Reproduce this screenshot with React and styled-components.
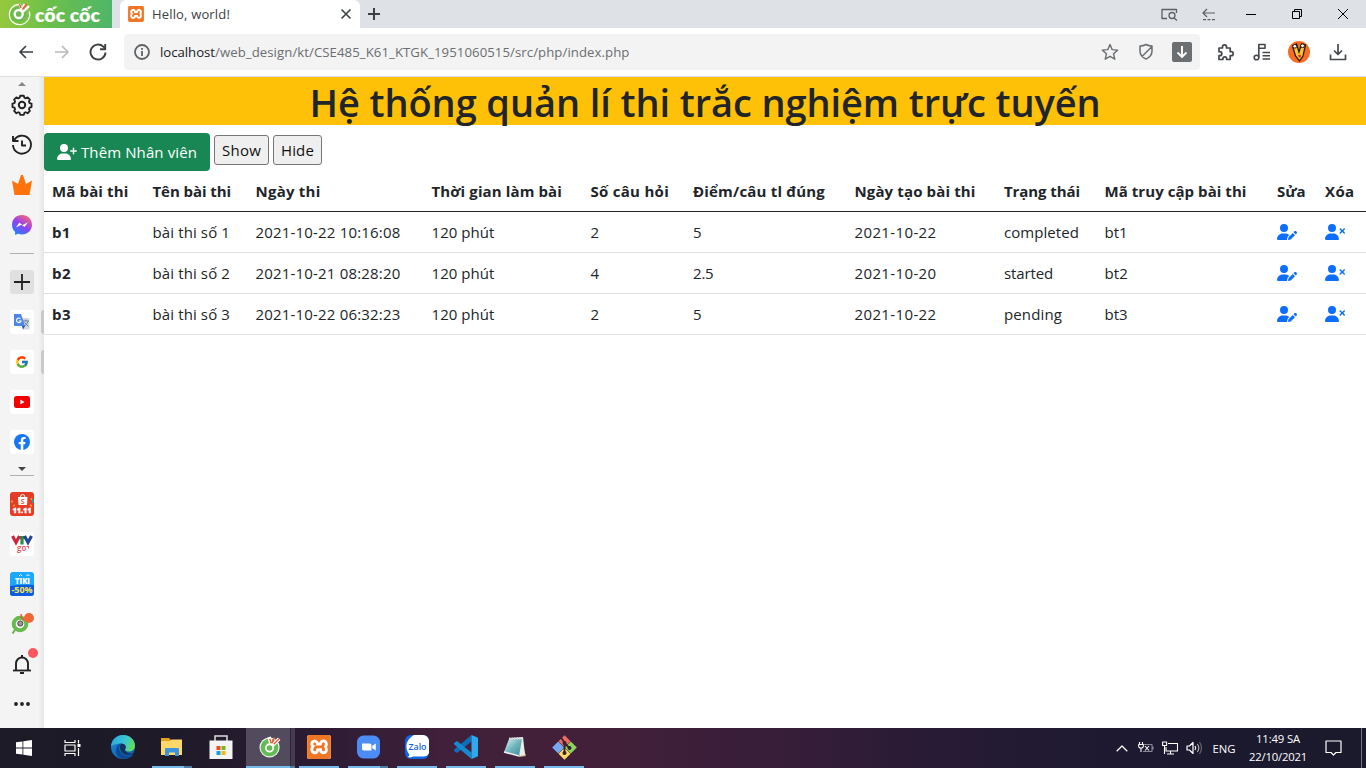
import React, { useLayoutEffect, useRef, useState } from "react";
import styled, { createGlobalStyle } from "styled-components";
import { FaUserPlus, FaUserPen, FaUserXmark } from "react-icons/fa6";
import { FcGoogle } from "react-icons/fc";
import { SiXampp } from "react-icons/si";

const GlobalStyle = createGlobalStyle`
  * { box-sizing: border-box; }
  body {
    margin: 0;
    background: #fff;
    color: #212529;
    font-family: "Segoe UI", "Open Sans", "Noto Sans", sans-serif;
    overflow: hidden;
  }
  svg { display: block; flex: none; }
`;

/* ---------- text that is tracked to a given width ---------- */

const Tracked = styled.span`
  display: inline-block;
  white-space: nowrap;
`;

function Fit({ w, children }) {
  const ref = useRef(null);
  const [spacing, setSpacing] = useState(0);
  useLayoutEffect(() => {
    const natural = ref.current.getBoundingClientRect().width;
    setSpacing((w - natural) / children.length);
  }, [w, children]);
  return (
    <Tracked ref={ref} style={{ letterSpacing: spacing }}>
      {children}
    </Tracked>
  );
}

/* ---------- layout ---------- */

const Screen = styled.div`
  width: 1366px;
  height: 768px;
  display: flex;
  flex-direction: column;
`;

const TabStrip = styled.header`
  height: 28px;
  background: #dee1e6;
  display: flex;
`;

const Brand = styled.div`
  width: 112px;
  height: 28px;
  background: linear-gradient(100deg, #97c93c 0%, #6bbf4b 45%, #4db56a 100%);
`;

const Tab = styled.div`
  width: 240px;
  height: 28px;
  margin-left: 8px;
  padding: 0 7px 0 8px;
  background: #fff;
  border-radius: 6px 6px 0 0;
  display: flex;
  align-items: center;
  font-size: 13px;
  color: #3c4043;
`;

const TabTitle = styled.div`
  margin-left: 8px;
  flex: 1;
  line-height: 28px;
`;

const NewTab = styled.div`
  width: 28px;
  display: flex;
  align-items: center;
  justify-content: center;
`;

const WindowControls = styled.div`
  margin-left: auto;
  display: flex;
`;

const ControlSlot = styled.div`
  width: ${(p) => p.$w}px;
  display: flex;
  align-items: center;
  justify-content: center;
`;

const Toolbar = styled.div`
  height: 49px;
  background: #fff;
  border-bottom: 1px solid #dcdfe3;
  display: flex;
  align-items: center;
  padding: 0 8px;
`;

const ToolSlot = styled.div`
  width: ${(p) => p.$w || 36}px;
  height: 36px;
  flex: none;
  display: flex;
  align-items: center;
  justify-content: center;
`;

const AddressBar = styled.div`
  width: 1076px;
  height: 36px;
  flex: none;
  margin-left: 8px;
  margin-right: 8px;
  background: #f3f3f3;
  border-radius: 4px;
  display: flex;
  align-items: center;
`;

const Url = styled.div`
  flex: 1;
  font-size: 13.2px;
  line-height: 36px;
  color: #202124;
  display: flex;
`;

const UrlPath = styled.span`
  color: #6a6d71;
`;

const Main = styled.div`
  height: 651px;
  display: flex;
`;

const Sidebar = styled.aside`
  width: 44px;
  background: linear-gradient(90deg, #f4f4f4 0, #f4f4f4 38px, #e6e6e6 44px);
  display: flex;
  flex-direction: column;
`;

const SideItem = styled.div`
  height: ${(p) => p.$h || 40}px;
  display: flex;
  align-items: center;
  justify-content: center;
  position: relative;
`;

const SideTile = styled.div`
  width: 24px;
  height: 24px;
  border-radius: 3px;
  overflow: hidden;
  background: ${(p) => p.$bg || "#fff"};
  display: flex;
  align-items: center;
  justify-content: center;
`;

const OpenMark = styled.i`
  position: absolute;
  right: 0;
  top: 8px;
  width: 3px;
  height: 24px;
  border-radius: 3px 0 0 3px;
  background: #c9c9c9;
`;

const Rule = styled.div`
  width: 24px;
  height: 1px;
  background: #b0b0b0;
`;

const ScrollCue = styled.div`
  height: ${(p) => p.$h}px;
  padding-top: ${(p) => p.$top}px;
  display: flex;
  flex-direction: column;
  align-items: center;
  gap: 4px;
`;

const Page = styled.main`
  flex: 1;
  background: #fff;
`;

const Title = styled.h1`
  margin: 0;
  height: 48px;
  background: #ffc107;
  text-align: center;
  font-size: 38px;
  font-weight: 560;
  line-height: 51px;
  color: #212529;
`;

const Actions = styled.div`
  margin-top: 8px;
  height: 38px;
  display: flex;
  gap: 4px;
`;

const AddButton = styled.button`
  width: 166px;
  height: 38px;
  padding: 0 0 0 13px;
  border: 0;
  border-radius: 4px;
  background: #198754;
  color: #fff;
  font: 15px "Segoe UI", "Open Sans", "Noto Sans", sans-serif;
  display: flex;
  align-items: center;
  gap: 4px;
`;

const PlainButton = styled.button`
  width: ${(p) => p.$w}px;
  height: 30px;
  margin-top: 2px;
  padding: 0 0 0 7px;
  border: 1px solid #767676;
  border-radius: 3px;
  background: #efefef;
  color: #111;
  text-align: left;
  font: 15px/28px "Segoe UI", "Open Sans", "Noto Sans", sans-serif;
`;

const Table = styled.table`
  width: 1322px;
  table-layout: fixed;
  border-collapse: separate;
  border-spacing: 0;
  font-size: 15px;
  line-height: 24px;
`;

const HeadCell = styled.th`
  height: 41px;
  padding: 0 0 0 8px;
  text-align: left;
  font-weight: 700;
  border-bottom: 1px solid #212529;
`;

const Cell = styled.td`
  height: 41px;
  padding: 0 0 0 8px;
  font-weight: ${(p) => (p.$bold ? 700 : 400)};
  border-bottom: 1px solid #dee2e6;
`;

const IconLink = styled.a`
  display: block;
  color: #0d6efd;
`;

const Taskbar = styled.footer`
  height: 40px;
  background: linear-gradient(90deg, #1c1b27 0, #1f1a29 180px, #2a1c33 310px, #40203a 440px, #43203a 600px, #351d38 800px, #231a33 1000px, #1c1930 1150px, #1b1a2c 1366px);
  display: flex;
`;

const TaskSystem = styled.div`
  width: 48px;
  height: 40px;
  display: flex;
  align-items: center;
  justify-content: center;
`;

const TaskApps = styled.div`
  display: flex;
  margin-left: 2.5px;
`;

const TaskApp = styled.div`
  width: 49px;
  height: 40px;
  display: flex;
  flex-direction: column;
  align-items: center;
  background: ${(p) => (p.$active ? "linear-gradient(90deg, #524a5d 0 44px, #2d2639 44px 45px, #453c50 45px)" : "none")};
`;

const TaskIcon = styled.div`
  flex: 1;
  display: flex;
  align-items: center;
`;

const Underline = styled.div`
  width: ${(p) => (p.$full ? 49 : 40)}px;
  height: 2px;
  background: ${(p) => (p.$stack ? `linear-gradient(90deg, #76b9ed 0 ${p.$full ? 44 : 32}px, #527da3 ${p.$full ? 44 : 32}px)` : "#76b9ed")};
`;

const TaskSpacer = styled.div`
  height: 2px;
`;

const Tray = styled.div`
  margin-left: auto;
  display: flex;
  align-items: center;
  color: #fff;
  font-size: 11.3px;
`;

const TraySlot = styled.div`
  width: ${(p) => p.$w}px;
  display: flex;
  justify-content: center;
`;

const Clock = styled.div`
  width: 72px;
  text-align: center;
  line-height: 18px;
`;

const TrayGap = styled.div`
  width: 9px;
`;

const DesktopEdge = styled.div`
  width: 5px;
  height: 40px;
  border-left: 1px solid #777583;
`;

/* ---------- icons ---------- */

const Line = ({ w = 20, h = w, c = "#3c4043", s = 1.7, vb, children }) => (
  <svg width={w} height={h} viewBox={vb || `0 0 ${w} ${h}`} fill="none" stroke={c} strokeWidth={s} strokeLinejoin="round">
    {children}
  </svg>
);

const BrandArt = () => (
  <svg width="112" height="28" viewBox="0 0 112 28">
    <path d="M20 4.300A10.200 10.200 0 1 0 29.300 11.500" fill="none" stroke="#fff" strokeWidth="1.200" />
    <circle cx="18.500" cy="14.500" r="8" fill="#6dbb50" />
    <circle cx="18.700" cy="14" r="4" fill="none" stroke="#fff" strokeWidth="2.300" />
    <path d="M19.500 4l2 5M29 6l-6 6M24.500 4l-2.500 6" stroke="#fff" strokeWidth="2.400" />
    <path d="M19.500 4l1.500 4M26.500 4l-4 5.500" stroke="#ef5736" strokeWidth="1.500" />
    <text x="35" y="21.800" fill="#fff" fontFamily="Lato, sans-serif" fontSize="18" fontWeight="800" textLength="65" lengthAdjust="spacingAndGlyphs">cốc cốc</text>
  </svg>
);

const XamppIcon = ({ size }) => (
  <svg width={size} height={size} viewBox="0 0 24 24">
    <rect width="24" height="24" rx="2.5" fill="#fff" />
    <SiXampp size={24} color="#ee7625" />
  </svg>
);

const CocCocIcon = ({ size = 24 }) => (
  <svg width={size} height={size} viewBox="0 0 24 24">
    <circle cx="11.500" cy="12.500" r="11" fill="#f0f3ea" />
    <circle cx="11.500" cy="12.500" r="9.700" fill="#62bb54" />
    <circle cx="11.500" cy="13" r="4" fill="#63b952" stroke="#fff" strokeWidth="2" />
    <path d="M11 1l2 7M22 3l-7 7" stroke="#fff" strokeWidth="4" />
    <path d="M11.800 3l1.200 4.500M17 1.500l-3 6.500M22 3l-6 6" stroke="#ee573c" strokeWidth="1.500" />
  </svg>
);

const Gear = () => (
  <Line w={22} c="#222" s={2} vb="0 0 22 22">
    <path d="M9 1.500h4l.6 2.200 1.500.7 2.100-1.100 2.500 2.500-1.100 2 .7 1.700 2.200.6v3.800l-2.200.6-.7 1.700 1.100 2-2.500 2.500-2.100-1.100-1.500.7-.6 2.200H9l-.6-2.200-1.500-.7-2.100 1.100-2.500-2.500 1.100-2-.7-1.700-2.200-.6v-3.800l2.200-.6.7-1.700-1.100-2 2.500-2.500 2.100 1.100 1.500-.7z" transform="translate(1 .4) scale(.91)" />
    <circle cx="11" cy="11" r="3.200" />
  </Line>
);

const Messenger = () => (
  <svg width="20" height="20" viewBox="0 0 20 20">
    <defs>
      <linearGradient id="msg" x1="0.2" y1="1" x2="0.8" y2="0">
        <stop offset="0" stopColor="#1688ff" />
        <stop offset=".5" stopColor="#9340f5" />
        <stop offset="1" stopColor="#ff6a6c" />
      </linearGradient>
    </defs>
    <path d="M10 0C4.300 0 0 4.200 0 9.700c0 2.900 1.200 5.400 3.100 7.100V20l3-1.300c1.200.4 2.500.7 3.900.7 5.700 0 10-4.200 10-9.700S15.700 0 10 0z" fill="url(#msg)" />
    <path d="M4 12.500L7.300 7.600l3.200 2.500L16 7.200l-3.400 4.900-3.200-2.300z" fill="#fff" />
  </svg>
);

const Translate = () => (
  <svg width="16" height="16" viewBox="0 0 16 16">
    <path d="M6 4h9.500v11.500H9z" fill="#d5d8dc" />
    <path d="M9 7h6M12 5.500V7M14 7.500c-1 3-2.500 4-4 5M10.500 8.500l4 4" stroke="#687d8c" fill="none" />
    <path d="M0 0h7l4 12H1a1 1 0 0 1-1-1z" fill="#4c86ec" />
    <path d="M8 12h3l-2 3.500z" fill="#2953b8" />
    <path d="M6.500 4.700A2.300 2.300 0 1 0 7 7H4.800" fill="none" stroke="#fff" strokeWidth="1.100" />
  </svg>
);

const Shopee = () => (
  <svg width="24" height="24" viewBox="0 0 24 24">
    <rect width="24" height="24" fill="#e63c25" />
    <path d="M1 9l2 1M21 6l1 2M3 14l2-1M20 13l2 1" stroke="#f5a52d" strokeWidth="1.500" />
    <path d="M23 7v4" stroke="#2b9b88" strokeWidth="2" />
    <path d="M8 5h9.500l-.5 8h-8.500z" fill="#fff" />
    <path d="M10.500 5a2.200 2.500 0 0 1 4.400 0" fill="none" stroke="#fff" />
    <text x="12.700" y="11.700" textAnchor="middle" fontSize="7" fontFamily="Open Sans" fontWeight="600" fill="#e63c25">S</text>
    <text x="2.500" y="21" fontSize="7.500" fontFamily="Open Sans" fontWeight="800" fill="#fff" stroke="#fff" strokeWidth=".4" textLength="19" lengthAdjust="spacingAndGlyphs">11.11</text>
  </svg>
);

const Vtv = () => (
  <svg width="24" height="24" viewBox="0 0 24 24" fill="none" strokeWidth="3.200">
    <path d="M8 5.500h8M12 5v7.500" stroke="#239044" />
    <path d="M2.500 4L6 10.500 9.500 4" stroke="#cf2640" />
    <path d="M14.500 4l3.500 6.500L21.500 4" stroke="#284697" />
    <text x="7" y="19" fontSize="8" fontFamily="Open Sans" fontWeight="600" fill="#e34355">go</text>
    <path d="M16.500 14.500h2v2" stroke="#e34355" strokeWidth="1" />
  </svg>
);

const Tiki = () => (
  <svg width="24" height="24" viewBox="0 0 24 24">
    <rect width="24" height="24" fill="#1ba8ff" />
    <path d="M0 14q12-2 24-1v11H0z" fill="#0d5cdf" />
    <text x="5" y="11.500" fontSize="8.500" fontFamily="Open Sans" fontWeight="800" fill="#fff" textLength="15" lengthAdjust="spacingAndGlyphs">TIKI</text>
    <path d="M9 4l1.500-1.500L12 4M16.500 4L18 2.500 19.500 4" fill="none" stroke="#fff" />
    <text x="1.500" y="21.400" fontSize="9" fontFamily="Open Sans" fontWeight="700" fill="#ffe44f" textLength="21" lengthAdjust="spacingAndGlyphs">-50%</text>
  </svg>
);

const Extension = () => (
  <Line w={18} c="#44484c" s={1.7}>
    <path d="M2 5h3.500V3.800a2 2 0 0 1 4 0V5h3.700v3.700h1a2 2 0 0 1 0 4h-1v3.800H9.700v-.8a1.900 1.900 0 0 0-3.800 0v.8H2v-3.800h.8a2 2 0 0 0 0-4H2z" />
  </Line>
);

const Avatar = () => (
  <svg width="22" height="22" viewBox="0 0 22 22">
    <circle cx="11" cy="11" r="11" fill="#fa6b23" />
    <path d="M4.500 5l3 10 4 5 3.500-5 2.500-11-4-1-2.500 8-2.500-8z" fill="#ffc42d" stroke="#271b12" strokeWidth="1.300" />
    <ellipse cx="6.800" cy="5.300" rx="2" ry="1.800" fill="#fff" stroke="#271b12" />
    <ellipse cx="14.500" cy="4.800" rx="2" ry="1.800" fill="#fff" stroke="#271b12" />
    <path d="M10 14l3 0-.5 3-2-1z" fill="#e52a28" />
  </svg>
);

const Edge = () => (
  <svg width="24" height="24" viewBox="0 0 24 24">
    <defs>
      <linearGradient id="edgeTop" x1="0" y1=".3" x2="1" y2=".6">
        <stop offset="0" stopColor="#2aa9de" />
        <stop offset=".55" stopColor="#38c7d0" />
        <stop offset="1" stopColor="#66de55" />
      </linearGradient>
      <linearGradient id="edgeLow" x1="0" y1="0" x2="1" y2="1">
        <stop offset="0" stopColor="#168bd8" />
        <stop offset="1" stopColor="#0e57a6" />
      </linearGradient>
    </defs>
    <circle cx="12" cy="12" r="12" fill="url(#edgeLow)" />
    <path d="M0 11C1 4 6 0 12 0c7 0 12 5 12 10.500 0 4-3 6-6 6-3 0-4.500-1-4-2 2-3 0-6-4-6-5 0-9 2-10 2.500z" fill="url(#edgeTop)" />
    <path d="M10 8.500c-3 3-2.500 10 4.500 12 3 .8 6 0 8-1-2 3-6 4.500-10.500 4.500-5-1-7.500-5-7-9 .3-3 2-5.500 5-6.500z" fill="#0d4a96" />
    <path d="M14 14.500c2-3 0-6-4-6-1.500 2-1.500 5 .2 8 2 3.500 8 4.500 12.300 2-3.500.5-8-.5-8.500-4z" fill="#14325f" />
  </svg>
);

const Explorer = () => (
  <svg width="22" height="18" viewBox="0 0 22 18">
    <path d="M0 0h8l2 2h11v5H0z" fill="#e4a31f" />
    <path d="M0 3h9l1.500-1.500H21V17H0z" fill="#ffd76b" />
    <path d="M4 18v-7a1 1 0 0 1 1-1h12a1 1 0 0 1 1 1v7h-4v-3.500H8V18z" fill="#3c94da" />
  </svg>
);

const Store = () => (
  <svg width="24" height="24" viewBox="0 0 24 24">
    <path d="M6 6V1h12v5" fill="none" stroke="#ddd" strokeWidth="1.500" />
    <path d="M.5 5.500h23V24H.5z" fill="#f4f4f4" />
    <path d="M7.500 11h4v4h-4z" fill="#e64b22" />
    <path d="M12.500 11h4v4h-4z" fill="#7cb51b" />
    <path d="M7.500 16h4v4h-4z" fill="#169fe0" />
    <path d="M12.500 16h4v4h-4z" fill="#f9b710" />
  </svg>
);

const Zoom = () => (
  <svg width="23" height="24" viewBox="0 0 23 24">
    <rect y=".5" width="23" height="23" rx="6.500" fill="#4b8cf5" />
    <path d="M5 8.500h7.500a2 2 0 0 1 2 2v5H7a2 2 0 0 1-2-2zM15.300 10.800l3.500-2.300v7l-3.500-2.300z" fill="#fff" />
  </svg>
);

const Zalo = () => (
  <svg width="24" height="24" viewBox="0 0 24 24">
    <rect width="24" height="24" rx="6" fill="#0e67e8" />
    <path d="M9 0h9a6 6 0 0 1 6 6v12a6 6 0 0 1-6 3.500H8c-2 1.200-4 1-5.500.5 1.500-.7 2-1.700 1.700-2.800C-.5 13 .5 5 9 0z" fill="#fff" />
    <text x="3.500" y="14.500" fontSize="8.500" fontFamily="Open Sans" fontWeight="600" fill="#1266d8" textLength="18" lengthAdjust="spacingAndGlyphs">Zalo</text>
  </svg>
);

const VsCode = () => (
  <svg width="24" height="24" viewBox="0 0 24 24">
    <path d="M17.500 0v6.500L3 18 0 16V14.800z" fill="#0b70b7" />
    <path d="M17.500 24v-6.500L3 6 0 8v1.200z" fill="#1689cf" />
    <path d="M17.500 0l6.500 2.800v18.400L17.500 24z" fill="#30a8ed" />
  </svg>
);

const Notepad = () => (
  <svg width="24" height="22" viewBox="0 0 24 22">
    <defs>
      <linearGradient id="note" x1="0" y1="0" x2="1" y2="1">
        <stop offset="0" stopColor="#e2f6f5" />
        <stop offset=".5" stopColor="#6fb4bc" />
        <stop offset="1" stopColor="#3b8795" />
      </linearGradient>
    </defs>
    <path d="M18 3l5 17-7 1z" fill="#c8b67c" />
    <path d="M7 2l13-1 2 18-5 1z" fill="#e9ecea" />
    <path d="M6 3l13 0-3 17L1 16z" fill="url(#note)" />
    <path d="M6 2.500h13" stroke="#d4d8d6" strokeWidth="2" strokeDasharray="1.500 1" />
    <path d="M1 16l15 4" stroke="#efefef" strokeWidth="1.500" />
  </svg>
);

const Git = () => (
  <svg width="25" height="25" viewBox="0 0 25 25">
    <path d="M12.500.2l6 6-6 6-6-6z" fill="#ee6a66" />
    <path d="M18.800 6.500l6 6-6 6-6-6z" fill="#8ed45c" />
    <path d="M6.200 6.500l6 6-6 6-6-6z" fill="#78a8f2" />
    <path d="M12.500 12.800l6 6-6 6-6-6z" fill="#fbdb66" />
    <path d="M9 2.500l3.500 5v11M12.500 8l5 5" fill="none" stroke="#352229" strokeWidth="1.800" />
    <circle cx="12.500" cy="8" r="2" fill="#352229" />
    <circle cx="12.500" cy="18" r="2" fill="#352229" />
    <circle cx="17.500" cy="13" r="2" fill="#352229" />
  </svg>
);

/* ---------- data ---------- */

const columns = [
  { label: "Mã bài thi", text: 76.5, width: 100.5 },
  { label: "Tên bài thi", text: 78.5, width: 103 },
  { label: "Ngày thi", text: 65, width: 176 },
  { label: "Thời gian làm bài", text: 130.5, width: 159 },
  { label: "Số câu hỏi", text: 78.5, width: 102.5 },
  { label: "Điểm/câu tl đúng", text: 132, width: 161.5 },
  { label: "Ngày tạo bài thi", text: 121, width: 149.5 },
  { label: "Trạng thái", text: 76, width: 100.5 },
  { label: "Mã truy cập bài thi", text: 142, width: 172.5 },
  { label: "Sửa", text: 28.5, width: 48 },
  { label: "Xóa", text: 29.5, width: 49 },
];

const exams = [
  [["b1", 18.5], ["bài thi số 1", 77.5], ["2021-10-22 10:16:08", 145], ["120 phút", 63], ["2", 8.6], ["5", 8.6], ["2021-10-22", 82], ["completed", 75], ["bt1", 23]],
  [["b2", 19], ["bài thi số 2", 77.5], ["2021-10-21 08:28:20", 145], ["120 phút", 63], ["4", 8.6], ["2.5", 20.5], ["2021-10-20", 82], ["started", 49], ["bt2", 23.5]],
  [["b3", 19], ["bài thi số 3", 77.5], ["2021-10-22 06:32:23", 145], ["120 phút", 63], ["2", 8.6], ["5", 8.6], ["2021-10-22", 82], ["pending", 58], ["bt3", 23]],
];

/* ---------- sections ---------- */

function BrowserChrome() {
  return (
    <>
      <TabStrip>
        <Brand><BrandArt /></Brand>
        <Tab>
          <XamppIcon size={16} />
          <TabTitle><Fit w={78}>Hello, world!</Fit></TabTitle>
          <Line w={14} s={1.6}><path d="M2.500 2.500l9 9M11.500 2.500l-9 9" /></Line>
        </Tab>
        <NewTab><Line w={12} s={2}><path d="M6 0v12M0 6h12" /></Line></NewTab>
        <WindowControls>
          <ControlSlot $w={42}>
            <Line w={17} h={13} c="#5c6064" s={1.3}>
              <path d="M6 10.500H1V1.500h14.500V5" /><circle cx="11" cy="7.500" r="3" /><path d="M13 10l3 2.500" />
            </Line>
          </ControlSlot>
          <ControlSlot $w={38}>
            <Line w={14} h={13} c="#5c6064" s={1.2}>
              <path d="M5 1L1 5l4 4M1 5h12" /><path d="M1 11.700h12" strokeDasharray="3 1.500" />
            </Line>
          </ControlSlot>
          <ControlSlot $w={46}><Line w={10} c="#000" s={1}><path d="M0 5.500h10" /></Line></ControlSlot>
          <ControlSlot $w={46}>
            <Line w={10} c="#000" s={1}><path d="M.5 2.500h7v7h-7zM2.500 2.500v-2h7v7h-2" /></Line>
          </ControlSlot>
          <ControlSlot $w={46}><Line w={10} c="#000" s={1}><path d="M0 0l10 10M10 0L0 10" /></Line></ControlSlot>
        </WindowControls>
      </TabStrip>
      <Toolbar>
        <ToolSlot><Line w={16}><path d="M15 8H2M8 2L2 8l6 6" /></Line></ToolSlot>
        <ToolSlot><Line w={16} c="#b7b9bb"><path d="M1 8h13M8 2l6 6-6 6" /></Line></ToolSlot>
        <ToolSlot>
          <Line w={18} s={1.9}><path d="M16.500 9.500a7.500 7.500 0 1 1-2.200-5.800L16 5.500" /><path d="M16.200 1v5.200H11" /></Line>
        </ToolSlot>
        <AddressBar>
          <ToolSlot>
            <Line w={16} c="#5f6368" s={1.8}><circle cx="8" cy="8" r="7" /><path d="M8 7v5M8 4v1.800" /></Line>
          </ToolSlot>
          <Url>
            <Fit w={55}>localhost</Fit>
            <UrlPath><Fit w={414.5}>/web_design/kt/CSE485_K61_KTGK_1951060515/src/php/index.php</Fit></UrlPath>
          </Url>
          <ToolSlot>
            <Line w={18} c="#6b6f72" s={1.4}><path d="M9 1.500l2.200 5.100 5.500.5-4.200 3.600 1.300 5.500L9 13.300l-4.800 2.900 1.300-5.500L1.300 7.100l5.500-.5z" /></Line>
          </ToolSlot>
          <ToolSlot>
            <Line w={16} h={18} c="#6b6f72" s={1.5}><path d="M8 1.500c2 1.200 4 1.600 6 1.600v5c0 4-2.500 6.500-6 8-3.500-1.500-6-4-6-8v-5c2 0 4-.4 6-1.600zM13.500 4L4 13.500" /></Line>
          </ToolSlot>
          <ToolSlot>
            <svg width="20" height="20" viewBox="0 0 20 20">
              <rect width="20" height="20" rx="2" fill="#6b6f72" />
              <path d="M10 4v11M5.500 10.500L10 15l4.500-4.500" fill="none" stroke="#fff" strokeWidth="1.900" />
            </svg>
          </ToolSlot>
        </AddressBar>
        <ToolSlot><Extension /></ToolSlot>
        <ToolSlot>
          <Line w={18} c="#44484c" s={1.6}>
            <circle cx="3.500" cy="14.500" r="2.300" /><path d="M5.800 14.500V1.500h6.200v3.700H5.800M9.500 9.500H17M9.500 12.800H17M9.500 16H17" />
          </Line>
        </ToolSlot>
        <ToolSlot $w={38}><Avatar /></ToolSlot>
        <ToolSlot $w={40}>
          <Line w={18} c="#44484c" s={1.7}><path d="M9 1v10M5 7.500l4 4 4-4M1.500 11.500v5h15v-5" /></Line>
        </ToolSlot>
      </Toolbar>
    </>
  );
}

function SidePanel() {
  return (
    <Sidebar>
      <ScrollCue $h={8} $top={5}><svg width="8" height="4"><path d="M0 4l4-4 4 4z" fill="#888" /></svg></ScrollCue>
      <SideItem><Gear /></SideItem>
      <SideItem>
        <Line w={22} c="#222" s={1.9}><path d="M3 6.500A9 9 0 1 1 2 11M2 2v5h5.500M11 6.500v5h4" /></Line>
      </SideItem>
      <SideItem>
        <svg width="22" height="22" viewBox="0 0 22 22"><path d="M1 6.500l6 3.500L10 1h2l3 9 6-3.500L18.500 21h-15z" fill="#ff730c" /></svg>
      </SideItem>
      <SideItem><Messenger /></SideItem>
      <SideItem $h={17}><Rule /></SideItem>
      <SideItem>
        <SideTile $bg="#e0e0e0"><Line w={16} c="#222" s={1.8}><path d="M8 0v16M0 8h16" /></Line></SideTile>
      </SideItem>
      <SideItem><SideTile><Translate /></SideTile><OpenMark /></SideItem>
      <SideItem><SideTile><FcGoogle size={14} /></SideTile><OpenMark /></SideItem>
      <SideItem>
        <SideTile>
          <svg width="16" height="12" viewBox="0 0 16 12"><rect width="16" height="12" rx="2.500" fill="#f50000" /><path d="M6.300 3.500v5l4.200-2.500z" fill="#fff" /></svg>
        </SideTile>
      </SideItem>
      <SideItem>
        <SideTile>
          <svg width="16" height="16" viewBox="0 0 16 16"><circle cx="8" cy="8" r="8" fill="#1877f2" /><path d="M6.800 16v-5.700H4.700V8h2.100V6.200c0-2.100 1.200-3.200 3.100-3.200l1.700.1v2h-1c-1 0-1.300.6-1.300 1.300V8h2.200l-.4 2.300H9.300V16z" fill="#fff" /></svg>
        </SideTile>
      </SideItem>
      <ScrollCue $h={22} $top={5}>
        <svg width="8" height="4"><path d="M0 0l4 4 4-4z" fill="#444" /></svg>
        <Rule />
      </ScrollCue>
      <SideItem><SideTile><Shopee /></SideTile></SideItem>
      <SideItem><SideTile><Vtv /></SideTile></SideItem>
      <SideItem><SideTile><Tiki /></SideTile></SideItem>
      <SideItem>
        <svg width="28" height="24" viewBox="0 0 28 24">
          <path d="M9 15l-4.500 6.500" stroke="#65b445" strokeWidth="2" />
          <circle cx="12" cy="12" r="6.300" fill="#fff" stroke="#65bb4d" strokeWidth="4" />
          <circle cx="12.300" cy="11.500" r="2.600" fill="#999" stroke="#444" />
          <path d="M13 2l1 5M18 4l-3 4" stroke="#ee573c" strokeWidth="1.500" />
          <circle cx="21" cy="6" r="5" fill="#f1673c" />
        </svg>
      </SideItem>
      <SideItem>
        <svg width="34" height="36" viewBox="0 0 34 36">
          <path d="M11 24v-6.500a6 6 0 0 1 12 0V24" fill="none" stroke="#222" strokeWidth="1.900" />
          <path d="M8 24.500h18" stroke="#222" strokeWidth="1.800" />
          <path d="M17 9v3M15 27h4" stroke="#222" strokeWidth="2" />
          <circle cx="28" cy="7" r="5" fill="#fc5661" />
        </svg>
      </SideItem>
      <SideItem>
        <svg width="18" height="4"><circle cx="3" cy="2" r="1.900" fill="#222" /><circle cx="9" cy="2" r="1.900" fill="#222" /><circle cx="15" cy="2" r="1.900" fill="#222" /></svg>
      </SideItem>
    </Sidebar>
  );
}

function ExamPage() {
  return (
    <Page>
      <Title><Fit w={791}>Hệ thống quản lí thi trắc nghiệm trực tuyến</Fit></Title>
      <Actions>
        <AddButton><FaUserPlus size={16} style={{ width: 20 }} /><Fit w={116}>Thêm Nhân viên</Fit></AddButton>
        <PlainButton $w={55}><Fit w={39}>Show</Fit></PlainButton>
        <PlainButton $w={49}><Fit w={33}>Hide</Fit></PlainButton>
      </Actions>
      <Table>
        <colgroup>{columns.map((c) => <col key={c.label} width={c.width} />)}</colgroup>
        <thead>
          <tr>{columns.map((c) => <HeadCell key={c.label}><Fit w={c.text}>{c.label}</Fit></HeadCell>)}</tr>
        </thead>
        <tbody>
          {exams.map((row) => (
            <tr key={row[0][0]}>
              {row.map(([text, w], i) => <Cell key={i} $bold={i === 0}><Fit w={w}>{text}</Fit></Cell>)}
              <Cell><IconLink><FaUserPen size={16} style={{ width: 20 }} /></IconLink></Cell>
              <Cell><IconLink><FaUserXmark size={16} style={{ width: 20 }} /></IconLink></Cell>
            </tr>
          ))}
        </tbody>
      </Table>
    </Page>
  );
}

const apps = [
  { id: "edge", icon: <Edge /> },
  { id: "explorer", icon: <Explorer />, open: true, stack: true },
  { id: "store", icon: <Store /> },
  { id: "coccoc", icon: <CocCocIcon size={22} />, open: true, stack: true, active: true },
  { id: "xampp", icon: <XamppIcon size={24} />, open: true },
  { id: "zoom", icon: <Zoom />, open: true, stack: true },
  { id: "zalo", icon: <Zalo />, open: true },
  { id: "vscode", icon: <VsCode />, open: true },
  { id: "notepad", icon: <Notepad />, open: true },
  { id: "git", icon: <Git />, open: true },
];

function SystemTaskbar() {
  return (
    <Taskbar>
      <TaskSystem>
        <svg width="16" height="16" viewBox="0 0 16 16"><path d="M0 2.300l6.500-.9v6.200H0zM7.300 1.300L16 0v7.600H7.300zM0 8.400h6.500v6.200L0 13.700zM7.300 8.400H16V16l-8.700-1.300z" fill="#fff" /></svg>
      </TaskSystem>
      <TaskSystem>
        <Line w={17} h={16} c="#fff" s={1.2}>
          <path d="M1 0v2.500h10V0M1 16v-2.500h10V16M1 5h10v6H1zM14.500 0v3.500M14.500 8v8" /><path d="M13.500 5.500h3" strokeWidth="3" />
        </Line>
      </TaskSystem>
      <TaskApps>
        {apps.map((a) => (
          <TaskApp key={a.id} $active={a.active}>
            <TaskIcon>{a.icon}</TaskIcon>
            {a.open ? <Underline $stack={a.stack} $full={a.active} /> : <TaskSpacer />}
          </TaskApp>
        ))}
      </TaskApps>
      <Tray>
        <TraySlot $w={24}><Line w={12} h={7} c="#fff" s={1.3}><path d="M.7 6.300L6 1l5.300 5.300" /></Line></TraySlot>
        <TraySlot $w={24}>
          <Line w={16} h={12} c="#fff" s={1.1}>
            <path d="M5 2.500h9v7H5M15 4.500v3" stroke="#8a8895" /><path d="M1.500 0v2M4.500 0v2M.7 2.500h4.600v2.300L4 6H2L.7 4.800zM3 6v4M7 4l4 4.500M11 4L7 8.500" />
          </Line>
        </TraySlot>
        <TraySlot $w={24}>
          <Line w={16} h={14} c="#fff" s={1.1}><path d="M6 2.500h9.500v7.500H4V6M8.500 10v3M5 13h7M.6 1h4v3.500h-4zM2.500 4.500V13" /></Line>
        </TraySlot>
        <TraySlot $w={24}>
          <Line w={17} h={14} c="#fff" s={1.2}>
            <path d="M1 5h2.500L7 1.500v11L3.500 9H1z" /><path d="M9 5q1.500 2 0 4" /><path d="M11.300 3q3 4 0 8" stroke="#aaa" /><path d="M13.500 1q4 6 0 12" stroke="#666" />
          </Line>
        </TraySlot>
        <TraySlot $w={36}><Fit w={23}>ENG</Fit></TraySlot>
        <Clock>
          <Fit w={44}>11:49 SA</Fit>
          <Fit w={58}>22/10/2021</Fit>
        </Clock>
        <TraySlot $w={38}>
          <Line w={17} h={16} c="#fff" s={1.2}><path d="M1 1h15v11.500h-5L8.500 15 6 12.500H1z" /></Line>
        </TraySlot>
        <TrayGap />
        <DesktopEdge />
      </Tray>
    </Taskbar>
  );
}

export default function App() {
  return (
    <Screen>
      <GlobalStyle />
      <BrowserChrome />
      <Main>
        <SidePanel />
        <ExamPage />
      </Main>
      <SystemTaskbar />
    </Screen>
  );
}
